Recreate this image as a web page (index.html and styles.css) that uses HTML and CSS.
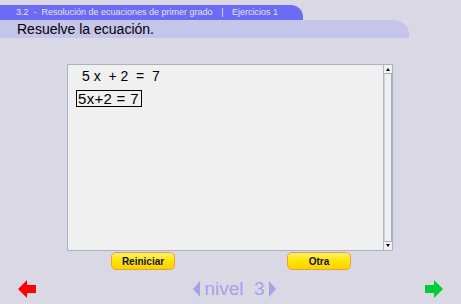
FILE: index.html
```html
<!DOCTYPE html>
<html lang="es">
<head>
  <meta charset="UTF-8">
  <title>Ejercicios 1</title>
  <link rel="stylesheet" href="styles.css">
</head>
<body>
  <header class="head">
    <div class="tab">3.2 &nbsp;-&nbsp; Resolución de ecuaciones de primer grado <span class="sep">|</span> Ejercicios 1</div>
    <div class="title">Resuelve la ecuación.</div>
  </header>

  <main class="panel">
    <div class="content">
      <p class="eq">5 x &nbsp;+ 2 &nbsp;= &nbsp;7</p>
      <span class="answer">5x+2 = 7</span>
    </div>
    <div class="scroll">
      <span class="arrow up"></span>
      <span class="track"></span>
      <span class="arrow down"></span>
    </div>
  </main>

  <div class="buttons">
    <button class="btn">Reiniciar</button>
    <button class="btn">Otra</button>
  </div>

  <footer class="nav">
    <svg class="big-arrow" width="20" height="20" viewBox="0 0 20 20">
      <path d="M1 10 L10 1 L10 6 L19 6 L19 14 L10 14 L10 19 Z" fill="#ff0000"/>
    </svg>
    <div class="level">
      <span class="tri left"></span>
      <span>nivel&nbsp;&nbsp;3</span>
      <span class="tri right"></span>
    </div>
    <svg class="big-arrow" width="20" height="20" viewBox="0 0 20 20">
      <path d="M19 10 L10 1 L10 6 L1 6 L1 14 L10 14 L10 19 Z" fill="#00cc33"/>
    </svg>
  </footer>
</body>
</html>
```

FILE: styles.css
```css
* {
  margin: 0;
  padding: 0;
  box-sizing: border-box;
  font-family: 'Liberation Sans', Arial, sans-serif;
}

body {
  width: 461px;
  height: 304px;
  background: #d9d8e4;
  overflow: hidden;
}

.head {
  padding-top: 5px;
}

.tab {
  width: 303px;
  height: 15px;
  background: #6b6bf5;
  border-top-right-radius: 12px;
  color: #e4e4ff;
  font-size: 9px;
  line-height: 15px;
  padding-left: 16px;
  white-space: nowrap;
  overflow: hidden;
}

.sep {
  margin: 0 6px;
}

.title {
  width: 409px;
  height: 18px;
  background: #c5c4e9;
  border-top-right-radius: 16px 14px;
  color: #000;
  font-size: 14px;
  line-height: 18px;
  padding-left: 17px;
}

.panel {
  display: flex;
  width: 326px;
  height: 187px;
  margin: 26px 0 0 67px;
  border: 1px solid #a9b1c2;
  background: #f0f0f0;
}

.content {
  flex: 1;
  padding: 3px 0 0 8px;
}

.eq {
  font-size: 14px;
  line-height: 17px;
  padding-left: 6px;
  color: #000;
}

.answer {
  display: inline-block;
  margin-top: 5px;
  border: 1px solid #000;
  font-size: 15px;
  line-height: 15px;
  padding: 0 2px 0 1px;
  letter-spacing: 0.3px;
  color: #000;
}

.scroll {
  width: 9px;
  display: flex;
  flex-direction: column;
  border-left: 1px solid #b0b8c8;
  background: #f0f0f0;
}

.arrow {
  height: 8px;
  position: relative;
}

.arrow::after {
  content: "";
  position: absolute;
  left: 2px;
  border-left: 2px solid transparent;
  border-right: 2px solid transparent;
}

.arrow.up::after {
  top: 3px;
  border-bottom: 3px solid #000;
}

.arrow.down::after {
  top: 2px;
  border-top: 3px solid #000;
}

.track {
  flex: 1;
  border: 1px solid #9fb2cc;
  border-left-color: #c7d2e2;
}

.buttons {
  display: flex;
  justify-content: space-between;
  width: 240px;
  margin: 1px 0 0 111px;
}

.btn {
  width: 64px;
  height: 18px;
  border: 1px solid #f0a030;
  border-radius: 5px;
  background: linear-gradient(#fff07a, #ffe600 45%, #ffd200);
  color: #101040;
  font-size: 10px;
  font-weight: bold;
}

.nav {
  display: flex;
  align-items: center;
  justify-content: space-between;
  padding: 8px 17px 0 17px;
}

.level {
  display: flex;
  align-items: center;
  gap: 4px;
  margin-left: 8px;
  color: #a4a3e8;
  font-size: 19px;
}

.tri {
  width: 0;
  height: 0;
  border-top: 8px solid transparent;
  border-bottom: 8px solid transparent;
}

.tri.left {
  border-right: 7px solid #a4a3e8;
}

.tri.right {
  border-left: 7px solid #a4a3e8;
}
```
